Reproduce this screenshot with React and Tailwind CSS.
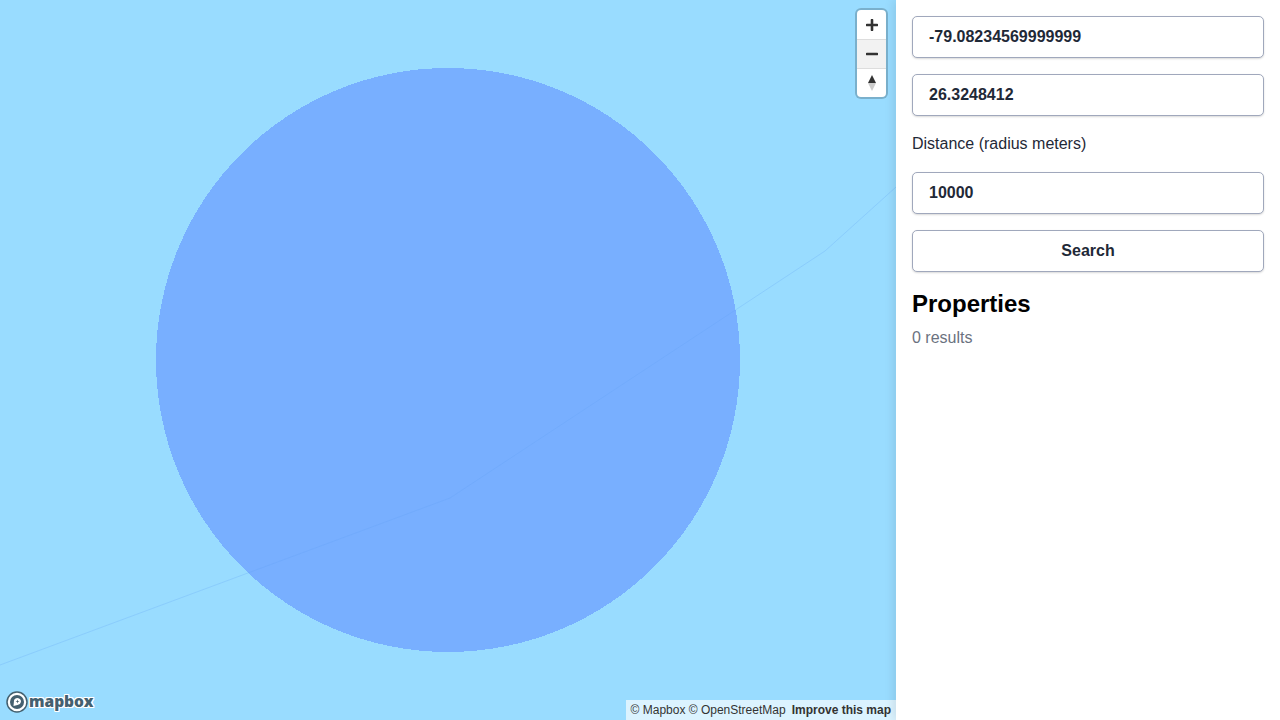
const inputCls =
  "w-full h-[42px] rounded-[5px] border border-[#a0a8bc] bg-white pl-4 pr-3 text-base font-bold text-[#1f2937] shadow-[0_1px_2px_rgba(0,0,0,0.15)] outline-none";

const MapCanvas = () => (
  <svg className="absolute inset-0 w-full h-full" viewBox="0 0 896 720">
    <circle cx="448" cy="360" r="292" fill="#78afff" shapeRendering="crispEdges" />
    <path
      d="M0 665 L450 498 L825 251 L896 187"
      fill="none"
      stroke="#5f9ff5"
      strokeOpacity="0.25"
      strokeWidth="1"
    />
  </svg>
);

const MapboxLogo = () => (
  <div className="absolute left-[6px] bottom-[7px] flex items-center">
    <svg width="22" height="22" viewBox="0 0 22 22">
      <circle cx="11" cy="11" r="10" fill="#fff" stroke="#44606f" strokeWidth="1.5" />
      <circle cx="11" cy="11" r="7" fill="#44606f" />
      <path d="M7.5 15 L8 9.5 Q8.5 7 11.5 7 Q15 7.5 15 10.5 Q14.5 13.5 11.5 14 Z" fill="#fff" />
      <path d="M11.5 8.6 L12 10 L13.4 10.5 L12 11 L11.5 12.4 L11 11 L9.6 10.5 L11 10 Z" fill="#44606f" />
    </svg>
    <span className="ml-[1px] font-['Noto_Sans',sans-serif] text-[15.5px] leading-none font-black text-[#44606f] [text-shadow:1px_0_0_#fff,-1px_0_0_#fff,0_1px_0_#fff,0_-1px_0_#fff,1px_1px_0_#fff,-1px_-1px_0_#fff,1px_-1px_0_#fff,-1px_1px_0_#fff]">
      mapbox
    </span>
  </div>
);

const MapControls = () => (
  <div className="absolute top-[10px] right-[10px] w-[29px] h-[87px] flex flex-col rounded-[4px] bg-white shadow-[0_0_0_2px_rgba(0,0,0,0.2)] overflow-hidden">
    <div className="h-[29px] flex items-center justify-center">
      <svg width="12" height="12" viewBox="0 0 12 12">
        <path d="M6 1 V11 M1 6 H11" stroke="#333" strokeWidth="2.6" strokeLinecap="round" />
      </svg>
    </div>
    <div className="h-[29px] flex items-center justify-center border-t border-[#ddd] bg-[#f2f2f2]">
      <svg width="12" height="4" viewBox="0 0 12 4">
        <path d="M1 2 H11" stroke="#333" strokeWidth="2.6" strokeLinecap="round" />
      </svg>
    </div>
    <div className="h-[29px] flex items-center justify-center border-t border-[#ddd]">
      <svg width="10" height="18" viewBox="0 0 10 18">
        <path d="M5 1 L9 9 H1 Z" fill="#333" />
        <path d="M5 17 L9 9 H1 Z" fill="#ccc" />
      </svg>
    </div>
  </div>
);

const Attribution = () => (
  <div className="absolute right-0 bottom-0 h-[20px] flex items-center gap-[6px] bg-white/65 pl-[5px] pr-[5px] text-xs text-[#333] font-['Liberation_Sans',sans-serif]">
    <span>© Mapbox © OpenStreetMap</span>
    <span className="font-bold">Improve this map</span>
  </div>
);

const App = () => {
  return (
    <div className="flex w-[1280px] h-[720px] overflow-hidden bg-white font-['Liberation_Sans',sans-serif]">
      <div className="relative w-[896px] h-full bg-[#99dcff] overflow-hidden">
        <MapCanvas />
        <MapControls />
        <MapboxLogo />
        <Attribution />
      </div>

      <div className="relative w-[384px] h-full bg-white p-4 shadow-[-2px_0_10px_rgba(0,0,0,0.1)]">
        <div className="flex flex-col gap-4">
          <input className={inputCls} readOnly value="-79.08234569999999" />
          <input className={inputCls} readOnly value="26.3248412" />
        </div>
        <label className="block mt-4 text-base leading-6 text-[#1f2937]">Distance (radius meters)</label>
        <input className={inputCls + " mt-4"} readOnly value="10000" />
        <button className="mt-4 w-full h-[42px] rounded-[5px] border border-[#a0a8bc] bg-white text-base font-bold text-[#1f2937] shadow-[0_1px_2px_rgba(0,0,0,0.15)]">
          Search
        </button>
        <h2 className="mt-4 text-2xl leading-8 font-bold text-black">Properties</h2>
        <p className="mt-[6px] text-base leading-6 text-[#6b7280]">0 results</p>
      </div>
    </div>
  );
};

export default App;
